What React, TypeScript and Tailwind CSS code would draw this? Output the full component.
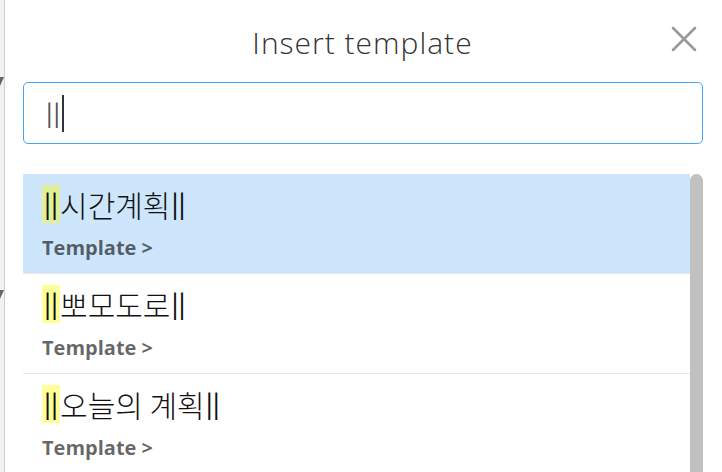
import { X } from "lucide-react";

const templates = [
  { name: "시간계획", active: true },
  { name: "뽀모도로", active: false },
  { name: "오늘의 계획", active: false },
];

const TemplateRow = ({ name, active }: { name: string; active: boolean }) => (
  <div
    className={`border-b border-[#e8e8e8] pl-[19px] pt-[11px] pb-[13px] ${
      active ? "bg-[#cde6fc]" : "bg-white"
    }`}
  >
    <div className="flex h-[38px] items-center text-[28px] leading-[38px] text-[#111] [font-family:Lato,'Noto_Sans_CJK_KR',sans-serif]">
      <span className="bg-[rgba(255,255,0,0.4)] px-[2px]">||</span>
      <span className="text-[30px] font-light [font-family:'Noto_Sans_CJK_KR',sans-serif]">{name}</span>
      <span className="ml-[1px]">||</span>
    </div>
    <div className="mt-[13px] h-[24px] text-[20px] font-bold leading-[24px] text-black/60 [font-family:'Open_Sans',sans-serif]">
      Template &gt;
    </div>
  </div>
);

export default function App() {
  return (
    <div className="relative flex h-[472px] w-[722px] overflow-hidden bg-white">
      <div className="relative w-[5px] shrink-0 border-r border-[#cfcfcf] bg-[#f2f2f2]">
        <svg className="absolute left-0 top-[77px]" width="4" height="9" viewBox="0 0 4 9">
          <polygon points="0,0 4,0 0,9" fill="#666" />
        </svg>
        <svg className="absolute left-0 top-[290px]" width="4" height="9" viewBox="0 0 4 9">
          <polygon points="0,0 4,0 0,9" fill="#666" />
        </svg>
      </div>

      <div className="flex min-w-0 flex-1 flex-col pl-[18px] pr-[19px]">
        <div className="flex h-[82px] items-center justify-center pr-[1px] pt-[2px]">
          <h1 className="text-[30px] font-light tracking-[1px] text-[#333] [font-family:'Open_Sans',sans-serif]">
            Insert template
          </h1>
        </div>
        <button className="absolute left-[662px] top-[17px] text-[#999]">
          <X size={44} strokeWidth={1.4} />
        </button>

        <div className="flex h-[62px] items-center rounded-[5px] border border-[#42a5f5] pl-[22px]">
          <span className="text-[26px] tracking-[1px] text-[#555] [font-family:Lato,sans-serif]">||</span>
          <span className="ml-[1px] h-[37px] w-[2px] bg-[#333]" />
        </div>

        <div className="mt-[30px] flex min-h-0 flex-1">
          <div className="flex-1">
            {templates.map((t) => (
              <TemplateRow key={t.name} name={t.name} active={t.active} />
            ))}
          </div>
          <div className="w-[13px] rounded-t-full bg-[#c1c1c1]" />
        </div>
      </div>
    </div>
  );
}
